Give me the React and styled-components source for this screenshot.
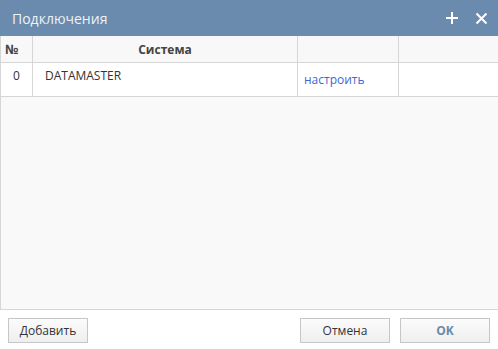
import React from "react";
import styled, { createGlobalStyle } from "styled-components";

const GlobalStyle = createGlobalStyle`
  *, *::before, *::after {
    box-sizing: border-box;
  }
  html, body {
    margin: 0;
    padding: 0;
    background: #fff;
  }
  body {
    font-family: "Open Sans", "Noto Sans", "DejaVu Sans", sans-serif;
    font-size: 12px;
    color: #333;
  }
`;

const Dialog = styled.div`
  width: 498px;
  height: 349px;
  display: flex;
  flex-direction: column;
  background: #fff;
  overflow: hidden;
`;

const TitleBar = styled.header`
  height: 36px;
  flex: none;
  background: #6a8bad;
  display: flex;
  align-items: center;
  padding: 0 6px 0 12px;
  color: #eef2f6;
  font-size: 14px;

  & .title {
    flex: 1;
  }
`;

const TitleIcon = styled.button`
  width: 22px;
  height: 22px;
  border: 0;
  padding: 0;
  margin-left: 7px;
  background: transparent;
  display: flex;
  align-items: center;
  justify-content: center;
  cursor: pointer;
`;

const Grid = styled.div`
  flex: 1;
  display: flex;
  flex-direction: column;
  background: #f9f9f9;
  border-left: 1px solid #d6d6d6;
  border-bottom: 1px solid #d6d6d6;
`;

const Row = styled.div`
  display: grid;
  grid-template-columns: 32px 265px 101px 1fr;
  height: ${(p) => p.$height}px;
  flex: none;
  background: ${(p) => (p.$head ? "#f8f8f8" : "#fff")};
  border-bottom: 1px solid #d6d6d6;
  font-weight: ${(p) => (p.$head ? 700 : 400)};
  color: ${(p) => (p.$head ? "#444" : "#333")};
`;

const Cell = styled.div`
  border-right: ${(p) => (p.$last ? "0" : "1px solid #d6d6d6")};
  display: flex;
  align-items: ${(p) => p.$align || "flex-start"};
  justify-content: ${(p) => p.$justify || "flex-start"};
  padding: ${(p) => p.$pad || "0"};
  font-size: ${(p) => p.$size || 12}px;
  white-space: nowrap;
  overflow: hidden;
`;

const LinkText = styled.a`
  color: #3d68d8;
  text-decoration: none;
  cursor: pointer;
`;

const Footer = styled.footer`
  height: 39px;
  flex: none;
  display: flex;
  align-items: flex-start;
  padding: 8px 8px 0 8px;
  gap: 10px;

  & .spacer {
    flex: 1;
  }
`;

const Button = styled.button`
  width: ${(p) => p.$width}px;
  height: 25px;
  border: 1px solid #c6c6c6;
  background: linear-gradient(#fbfbfb, #efefef);
  font-family: inherit;
  font-size: 12px;
  color: ${(p) => (p.$primary ? "#6a8bad" : "#333")};
  font-weight: ${(p) => (p.$primary ? 700 : 400)};
  padding: 0;
  cursor: pointer;
`;

const PlusIcon = () => (
  <svg width="14" height="14" viewBox="0 0 14 14">
    <path d="M7 1v12M1 7h12" stroke="#fff" strokeWidth="2" />
  </svg>
);

const CloseIcon = () => (
  <svg width="13" height="13" viewBox="0 0 13 13">
    <path d="M1.5 1.5l10 10M11.5 1.5l-10 10" stroke="#fff" strokeWidth="2" />
  </svg>
);

const connections = [{ id: 0, system: "DATAMASTER" }];

export default function App() {
  return (
    <>
      <GlobalStyle />
      <Dialog>
        <TitleBar>
          <span className="title">Подключения</span>
          <TitleIcon aria-label="Добавить">
            <PlusIcon />
          </TitleIcon>
          <TitleIcon aria-label="Закрыть">
            <CloseIcon />
          </TitleIcon>
        </TitleBar>

        <Grid>
          <Row $head $height={27}>
            <Cell $align="center" $pad="0 0 0 4px" $size={13}>№</Cell>
            <Cell $align="center" $justify="center">Система</Cell>
            <Cell />
            <Cell $last />
          </Row>
          {connections.map((c) => (
            <Row key={c.id} $height={34}>
              <Cell $justify="center" $pad="4px 0 0 0">{c.id}</Cell>
              <Cell $pad="4px 0 0 12px">{c.system}</Cell>
              <Cell $pad="8px 0 0 6px">
                <LinkText>настроить</LinkText>
              </Cell>
              <Cell $last />
            </Row>
          ))}
        </Grid>

        <Footer>
          <Button $width={80}>Добавить</Button>
          <span className="spacer" />
          <Button $width={90}>Отмена</Button>
          <Button $width={90} $primary>
            OK
          </Button>
        </Footer>
      </Dialog>
    </>
  );
}
